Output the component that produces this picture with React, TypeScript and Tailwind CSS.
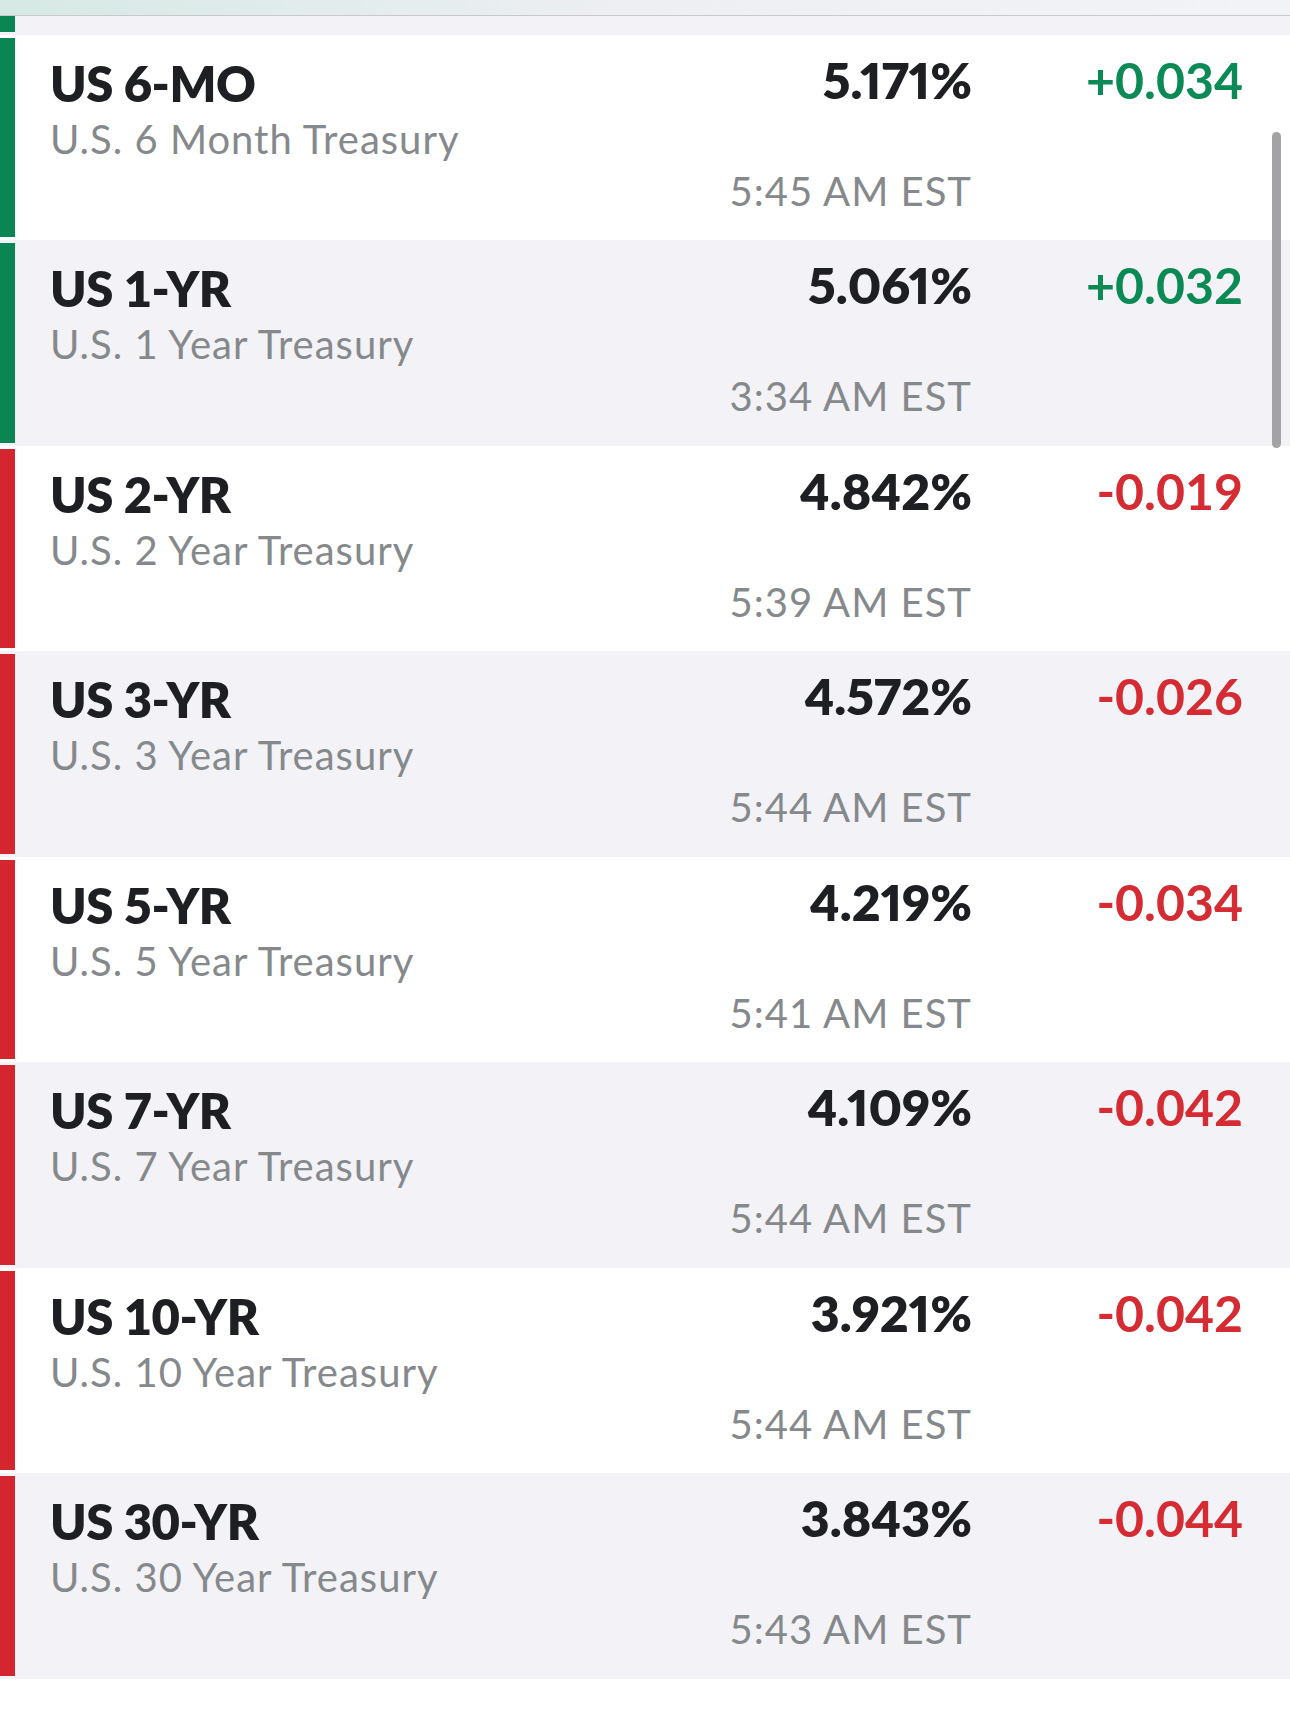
import React from 'react';

interface Bond {
    symbol: string;
    name: string;
    yieldPct: string;
    change: string;
    time: string;
    up: boolean;
}

const bonds: Bond[] = [
    { symbol: 'US 6-MO', name: 'U.S. 6 Month Treasury', yieldPct: '5.171%', change: '+0.034', time: '5:45 AM EST', up: true },
    { symbol: 'US 1-YR', name: 'U.S. 1 Year Treasury', yieldPct: '5.061%', change: '+0.032', time: '3:34 AM EST', up: true },
    { symbol: 'US 2-YR', name: 'U.S. 2 Year Treasury', yieldPct: '4.842%', change: '-0.019', time: '5:39 AM EST', up: false },
    { symbol: 'US 3-YR', name: 'U.S. 3 Year Treasury', yieldPct: '4.572%', change: '-0.026', time: '5:44 AM EST', up: false },
    { symbol: 'US 5-YR', name: 'U.S. 5 Year Treasury', yieldPct: '4.219%', change: '-0.034', time: '5:41 AM EST', up: false },
    { symbol: 'US 7-YR', name: 'U.S. 7 Year Treasury', yieldPct: '4.109%', change: '-0.042', time: '5:44 AM EST', up: false },
    { symbol: 'US 10-YR', name: 'U.S. 10 Year Treasury', yieldPct: '3.921%', change: '-0.042', time: '5:44 AM EST', up: false },
    { symbol: 'US 30-YR', name: 'U.S. 30 Year Treasury', yieldPct: '3.843%', change: '-0.044', time: '5:43 AM EST', up: false },
];

function BondRow({ bond, index }: { bond: Bond; index: number }) {
    const shaded = index % 2 === 1;
    return (
        <div className={`flex ${shaded ? 'h-[206px] bg-[#f3f3f7]' : 'h-[205px] bg-white'}`}>
            <div className={`w-[15px] my-[3px] ${bond.up ? 'bg-[#0a8554]' : 'bg-[#d3262e]'}`}></div>
            <div className="flex flex-1 pl-[35px] pr-[47px] pt-[24px]">
                <div className="flex-1">
                    <div className="text-[49px] leading-[49px] font-extrabold tracking-[-0.5px] text-[#1d1f23]">{bond.symbol}</div>
                    <div className="mt-[11px] text-[40px] leading-[40px] tracking-[1px] text-[#86898c]">{bond.name}</div>
                </div>
                <div className="flex flex-col items-end -mt-[4px]">
                    <div className="text-[50px] leading-[50px] font-extrabold proportional-nums text-[#1d1f23]">{bond.yieldPct}</div>
                    <div className="mt-[66px] text-[40px] leading-[40px] tracking-[1px] text-[#86898c]">{bond.time}</div>
                </div>
                <div
                    className={`w-[271px] -mt-[4px] text-right text-[50px] leading-[50px] font-bold ${bond.up ? 'text-[#0b8a56]' : 'text-[#d52b33]'}`}
                >
                    {bond.change}
                </div>
            </div>
        </div>
    );
}

export default function App() {
    return (
        <div className="relative w-[1290px] h-[1710px] bg-white overflow-hidden font-['Lato',sans-serif]">
            <div className="h-[16px] border-b border-[#c8c8cd] bg-gradient-to-r from-[#d6e9e5] via-[#eeeff3] to-[#f1f3f6]"></div>
            <div className="flex h-[19px] bg-[#f3f3f7]">
                <div className="w-[15px] mb-[3px] bg-[#0a8554]"></div>
            </div>
            {bonds.map((bond, i) => (
                <BondRow key={bond.symbol} bond={bond} index={i} />
            ))}
            <div className="absolute right-[9px] top-[132px] w-[9px] h-[316px] rounded-full bg-[#a3a3a6]"></div>
        </div>
    );
}
